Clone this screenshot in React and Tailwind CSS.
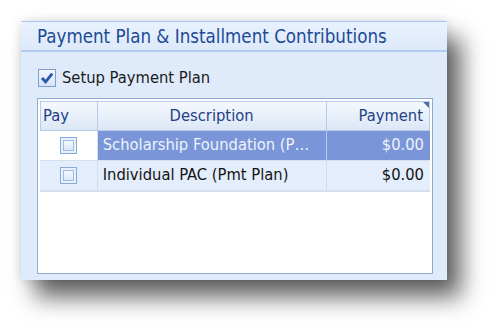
import React from 'react';

const font = { fontFamily: "'DejaVu Sans Condensed', 'DejaVu Sans', sans-serif" };

const GridCheck = () => (
  <div className="w-[17px] h-[17px] border border-[#86aadd] bg-[#e9f1fc] flex items-center justify-center">
    <div className="w-[11px] h-[11px] border border-[#9dbbe6] bg-gradient-to-b from-[#f6f9fe] to-[#dae6f7]" />
  </div>
);

export default function App() {
  return (
    <div className="min-h-screen bg-white p-[21px]" style={font}>
      <div className="w-[426px] h-[259px] bg-[#dfeafa] border-t border-[#a9c5ec] shadow-[14px_17px_22px_rgba(0,0,0,0.62),0_0_10px_rgba(0,0,0,0.12)] flex flex-col">
        {/* title bar */}
        <div className="h-[30px] border-b-2 border-[#b3cdf0] bg-gradient-to-b from-[#e9f2fe] to-[#dde9fa] pl-[16px] pt-[3px] flex items-center">
          <span className="text-[18.6px] leading-none text-[#1c4a94]">Payment Plan &amp; Installment Contributions</span>
        </div>

        {/* setup checkbox */}
        <div className="flex items-center gap-[6px] ml-[17px] mt-[17px]">
          <div className="w-[18px] h-[18px] border border-[#7b9fd4] bg-gradient-to-b from-[#f3f7fd] to-[#d6e3f6] flex items-center justify-center">
            <svg width="14" height="14" viewBox="0 0 14 14">
              <path d="M2 7 L5.6 10.8 L12.2 2.6" fill="none" stroke="#2d55a8" strokeWidth="2.8" />
            </svg>
          </div>
          <span className="text-[16.4px] leading-none text-[#1a1a1a]">Setup Payment Plan</span>
        </div>

        {/* grid */}
        <div className="ml-[16px] mt-[11px] w-[396px] h-[176px] border border-[#90aad0] bg-white p-[2px] flex flex-col">
          <div className="flex h-[30px] bg-gradient-to-b from-[#f6f9fe] to-[#dbe6f6] text-[#1f3f86] text-[16.4px] leading-none">
            <div className="w-[58px] border border-[#b8cbe8] flex items-center pl-[2px]">Pay</div>
            <div className="w-[230px] border-y border-r border-[#b8cbe8] flex items-center justify-center">Description</div>
            <div className="relative w-[104px] border-y border-r border-[#b8cbe8] flex items-center justify-end pr-[6px]">
              Payment
              <svg className="absolute top-0 right-0" width="6" height="6" viewBox="0 0 6 6">
                <path d="M0 0 L6 0 L6 6 Z" fill="#4a6aa8" />
              </svg>
            </div>
          </div>

          <div className="flex h-[30px] border-b border-[#d3dff1] text-[16.4px] leading-none">
            <div className="w-[58px] bg-white border-r border-[#d3dff1] flex items-center justify-center">
              <GridCheck />
            </div>
            <div className="w-[230px] bg-[#7a96d8] text-[#eef2fb] flex items-center pl-[5px] border-r border-[#b9c9ec]">
              Scholarship Foundation (P…
            </div>
            <div className="w-[104px] bg-[#7a96d8] text-[#eef2fb] flex items-center justify-end pr-[6px]">$0.00</div>
          </div>

          <div className="flex h-[31px] bg-[#e3edfb] border-b-2 border-[#d3dff1] text-[16.4px] leading-none text-[#141414]">
            <div className="w-[58px] border-r border-[#d0dcf0] flex items-center justify-center">
              <GridCheck />
            </div>
            <div className="w-[230px] flex items-center pl-[5px] border-r border-[#d0dcf0]">Individual PAC (Pmt Plan)</div>
            <div className="w-[104px] flex items-center justify-end pr-[6px]">$0.00</div>
          </div>
        </div>
      </div>
    </div>
  );
}
